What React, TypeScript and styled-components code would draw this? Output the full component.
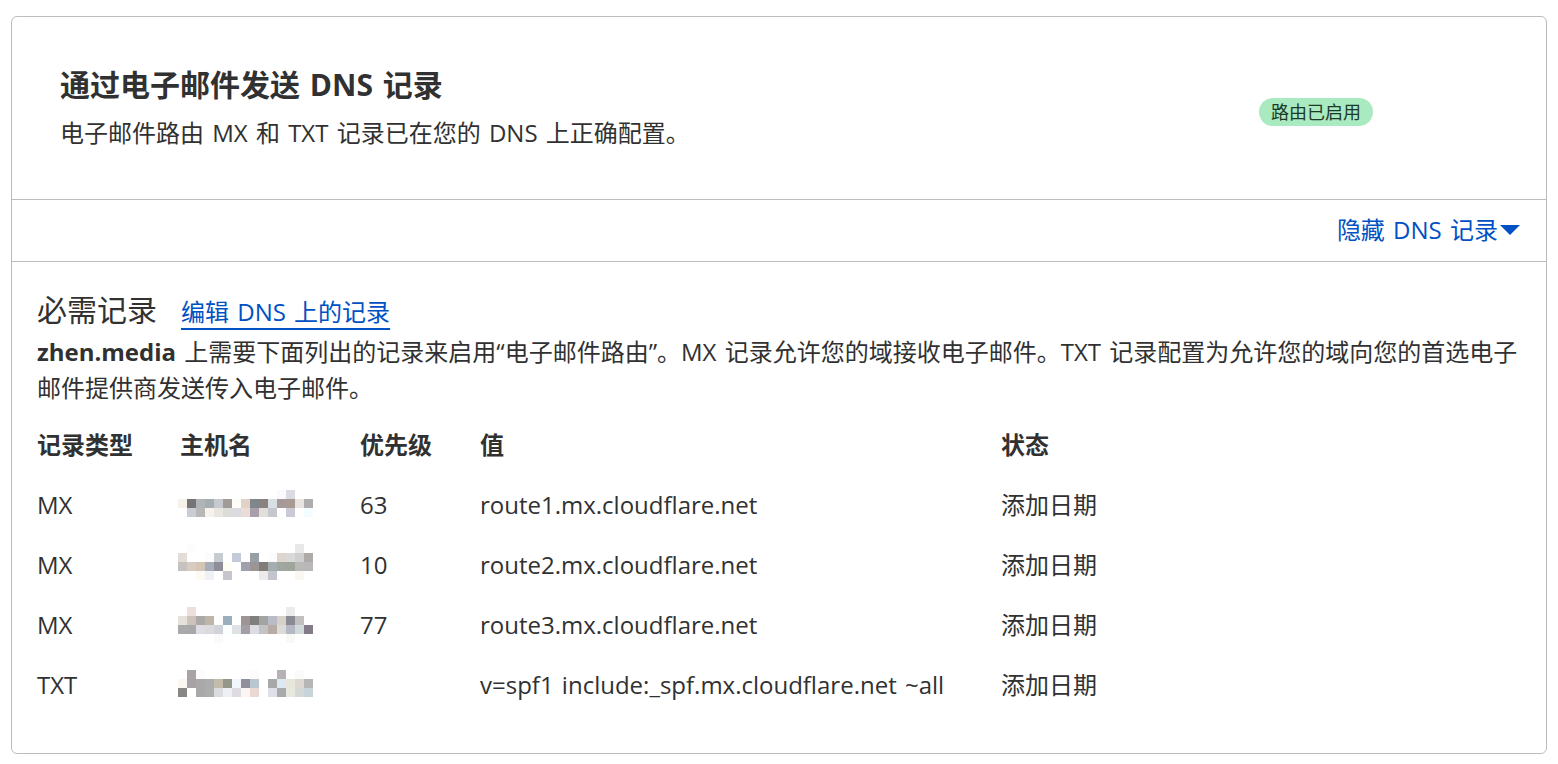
import React from "react";
import styled, { createGlobalStyle } from "styled-components";

const GlobalStyle = createGlobalStyle`
  html, body { margin: 0; padding: 0; background: #ffffff; }
  body {
    font-family: "Open Sans", "Noto Sans CJK SC", sans-serif;
    color: #313131;
    word-spacing: 0.125em;
  }
  * { box-sizing: border-box; }
`;

const Page = styled.div`
  padding: 16px 11px;
`;

const Card = styled.section`
  border: 1px solid #bcbcbc;
  border-radius: 6px;
  background: #ffffff;
`;

const Header = styled.div`
  display: flex;
  justify-content: space-between;
  align-items: center;
  padding: 50px 173px 48px 48px;
  border-bottom: 1px solid #bcbcbc;
`;

const HeaderText = styled.div`
  display: flex;
  flex-direction: column;
`;

const Title = styled.h2`
  margin: 0;
  font-size: 30px;
  line-height: 36px;
  font-weight: 700;
  color: #313131;
`;

const Subtitle = styled.p`
  margin: 12px 0 0;
  font-size: 24px;
  line-height: 36px;
  color: #313131;
`;

const Badge = styled.span`
  margin-top: 5px;
  display: inline-flex;
  align-items: center;
  height: 28px;
  padding: 0 12px;
  border-radius: 14px;
  background: #a9eac1;
  color: #1c3a25;
  font-size: 18px;
  line-height: 28px;
  word-spacing: 0;
`;

const ToggleRow = styled.div`
  display: flex;
  justify-content: flex-end;
  padding: 12px 26px 13px;
  border-bottom: 1px solid #bcbcbc;
`;

const ToggleLink = styled.a`
  display: inline-flex;
  align-items: center;
  gap: 2px;
  font-size: 24px;
  line-height: 36px;
  color: #0051c3;
  text-decoration: none;
  cursor: pointer;
`;

const Records = styled.div`
  padding: 30px 24px 38px 25px;
`;

const SectionHead = styled.div`
  display: flex;
  align-items: baseline;
  gap: 24px;
`;

const SectionTitle = styled.h3`
  margin: 0;
  font-size: 30px;
  line-height: 36px;
  font-weight: 400;
  color: #313131;
`;

const EditLink = styled.a`
  font-size: 24px;
  line-height: 36px;
  color: #0051c3;
  text-decoration: underline;
  text-decoration-thickness: 2px;
  text-underline-offset: 7px;
  cursor: pointer;
`;

const Description = styled.p`
  margin: 4px 0 0;
  font-size: 24px;
  line-height: 36px;
  color: #313131;

  strong { font-weight: 700; }
`;

const Table = styled.div`
  margin-top: 9px;
  display: grid;
  grid-template-columns: 143px 180px 120px 521px 1fr;
  grid-auto-rows: 60px;
  align-items: center;
`;

const Cell = styled.div<{ $head?: boolean }>`
  font-size: 24px;
  line-height: 36px;
  font-weight: ${(p) => (p.$head ? 700 : 400)};
  color: #313131;
  white-space: nowrap;
`;

const HostCell = styled.div`
  height: 60px;
  margin-left: -2px;

  svg { display: block; }
`;

type Row = (string | null)[];

const _ = null;

type HostData = { top: number; rows: Row[] };

const hosts: HostData[] = [
  {
    top: 15,
    rows: [
      [_, _, _, _, _, _, _, _, _, _, _, "#fafafc", "#dcdae2", _, _],
      ["#f6f2ea", "#767375", "#b0b4b6", "#a5aeae", "#c6c9d0", "#a09b98", "#fefcf6", "#e3d1c5", "#7f868c", "#8a8280", "#d8e0e2", "#a6999a", "#a99a93", "#e9e4e1", "#aeacad"],
      [_, "#c8ccd5", "#b7b8b5", "#f7f2ed", "#e9e5df", "#dcdcd9", "#dcd9e0", "#ecdcd8", "#a7a0ac", "#e2deda", "#c5c7cf", _, "#c9cad5", _, "#f3fcff"],
    ],
  },
  {
    top: 9,
    rows: [
      [_, "#fcfcfc", _, _, _, _, _, _, _, _, _, _, _, "#e8e8e8", _],
      ["#e2ddd7", _, _, "#fcfcfc", "#c6ccd2", _, "#c3cad8", _, "#97a0a4", _, "#fcfcfc", "#dcd6cf", "#dad9d9", "#cfcfd0", "#aeaaa8"],
      ["#c5c2bf", "#d8cbc0", "#d3c6b7", "#a6afb7", "#8f8e98", "#fefef2", _, "#a0a0ae", "#9b9595", "#7f7c79", "#a4aeaf", "#9fa7a0", "#9fa59d", "#b9b9b8", "#b9b7b7"],
      [_, _, "#fdfaf5", "#eef2f6", _, "#c9c5cc", _, _, _, "#ebebeb", "#c3c5cd", _, _, "#faf6f2", _],
    ],
  },
  {
    top: 12,
    rows: [
      [_, "#ebe0dc", _, _, _, _, _, _, _, _, _, _, "#ebebeb", _, _],
      ["#e4e0da", "#cdc2bd", "#aba8a6", "#bdb4aa", "#fcfcfc", "#9aafbb", _, "#9d9595", "#7f7f7f", "#a3a3a1", "#b9bcc6", "#d6d0c8", "#8a8a95", "#c1c0bf", _],
      ["#aaa9ab", "#a9a8a9", "#dedde4", "#dcdadd", "#d0d3d9", "#fafeff", "#dfe2e4", "#a39da5", "#dedce3", "#c3c3c3", "#b8aba6", "#dbdbd7", "#b6b9c4", "#d1dadb", "#837b87"],
      [_, _, _, _, "#fafafa", _, _, _, _, _, _, _, "#f7f9f4", _, _],
    ],
  },
  {
    top: 15,
    rows: [
      [_, "#a8a2a6", "#fcfcfc", _, _, _, _, _, "#fcfcfc", _, _, "#b7b1b6", _, "#fafafa", _],
      ["#faf7f0", "#a5a1a5", "#a9a9a9", "#adacad", "#c2bcab", "#949789", "#f2f7fd", "#918f9a", "#b8c7d1", _, "#a8a8a8", "#dce8f2", "#e6e7da", "#ddd8d3", "#b6b6b6"],
      ["#888786", _, "#a8a8a8", "#adadad", "#dbdcdf", "#eef0f3", "#dedbe2", "#fbf6f2", "#e9d9d2", _, "#dfe0e9", "#a8aaad", "#e8e8df", "#d4d9d8", "#c7d4d8"],
    ],
  },
];

const Mosaic: React.FC<{ data: HostData }> = ({ data }) => (
  <svg width="135" height="60" viewBox="0 0 135 60" aria-label="hidden hostname">
    {data.rows.map((row, r) =>
      row.map((c, i) =>
        c ? <rect key={`${r}-${i}`} x={i * 9} y={data.top + r * 9} width="9" height="9" fill={c} /> : null
      )
    )}
  </svg>
);

const records = [
  { type: "MX", priority: "63", value: "route1.mx.cloudflare.net" },
  { type: "MX", priority: "10", value: "route2.mx.cloudflare.net" },
  { type: "MX", priority: "77", value: "route3.mx.cloudflare.net" },
  { type: "TXT", priority: "", value: "v=spf1 include:_spf.mx.cloudflare.net ~all" },
];

const Caret = () => (
  <svg width="20" height="10" viewBox="0 0 20 10" aria-hidden="true">
    <path d="M0 0 H20 L10 10 Z" fill="#0051c3" />
  </svg>
);

export default function App() {
  return (
    <>
      <GlobalStyle />
      <Page>
        <Card>
          <Header>
            <HeaderText>
              <Title>通过电子邮件发送 DNS 记录</Title>
              <Subtitle>电子邮件路由 MX 和 TXT 记录已在您的 DNS 上正确配置。</Subtitle>
            </HeaderText>
            <Badge>路由已启用</Badge>
          </Header>
          <ToggleRow>
            <ToggleLink>
              隐藏 DNS 记录
              <Caret />
            </ToggleLink>
          </ToggleRow>
          <Records>
            <SectionHead>
              <SectionTitle>必需记录</SectionTitle>
              <EditLink>编辑 DNS 上的记录</EditLink>
            </SectionHead>
            <Description>
              <strong>zhen.media</strong> 上需要下面列出的记录来启用“电子邮件路由”。MX 记录允许您的域接收电子邮件。TXT 记录配置为允许您的域向您的首选电子邮件提供商发送传入电子邮件。
            </Description>
            <Table>
              <Cell $head>记录类型</Cell>
              <Cell $head>主机名</Cell>
              <Cell $head>优先级</Cell>
              <Cell $head>值</Cell>
              <Cell $head>状态</Cell>
              {records.map((rec, i) => (
                <React.Fragment key={i}>
                  <Cell>{rec.type}</Cell>
                  <HostCell>
                    <Mosaic data={hosts[i]} />
                  </HostCell>
                  <Cell>{rec.priority}</Cell>
                  <Cell>{rec.value}</Cell>
                  <Cell>添加日期</Cell>
                </React.Fragment>
              ))}
            </Table>
          </Records>
        </Card>
      </Page>
    </>
  );
}
